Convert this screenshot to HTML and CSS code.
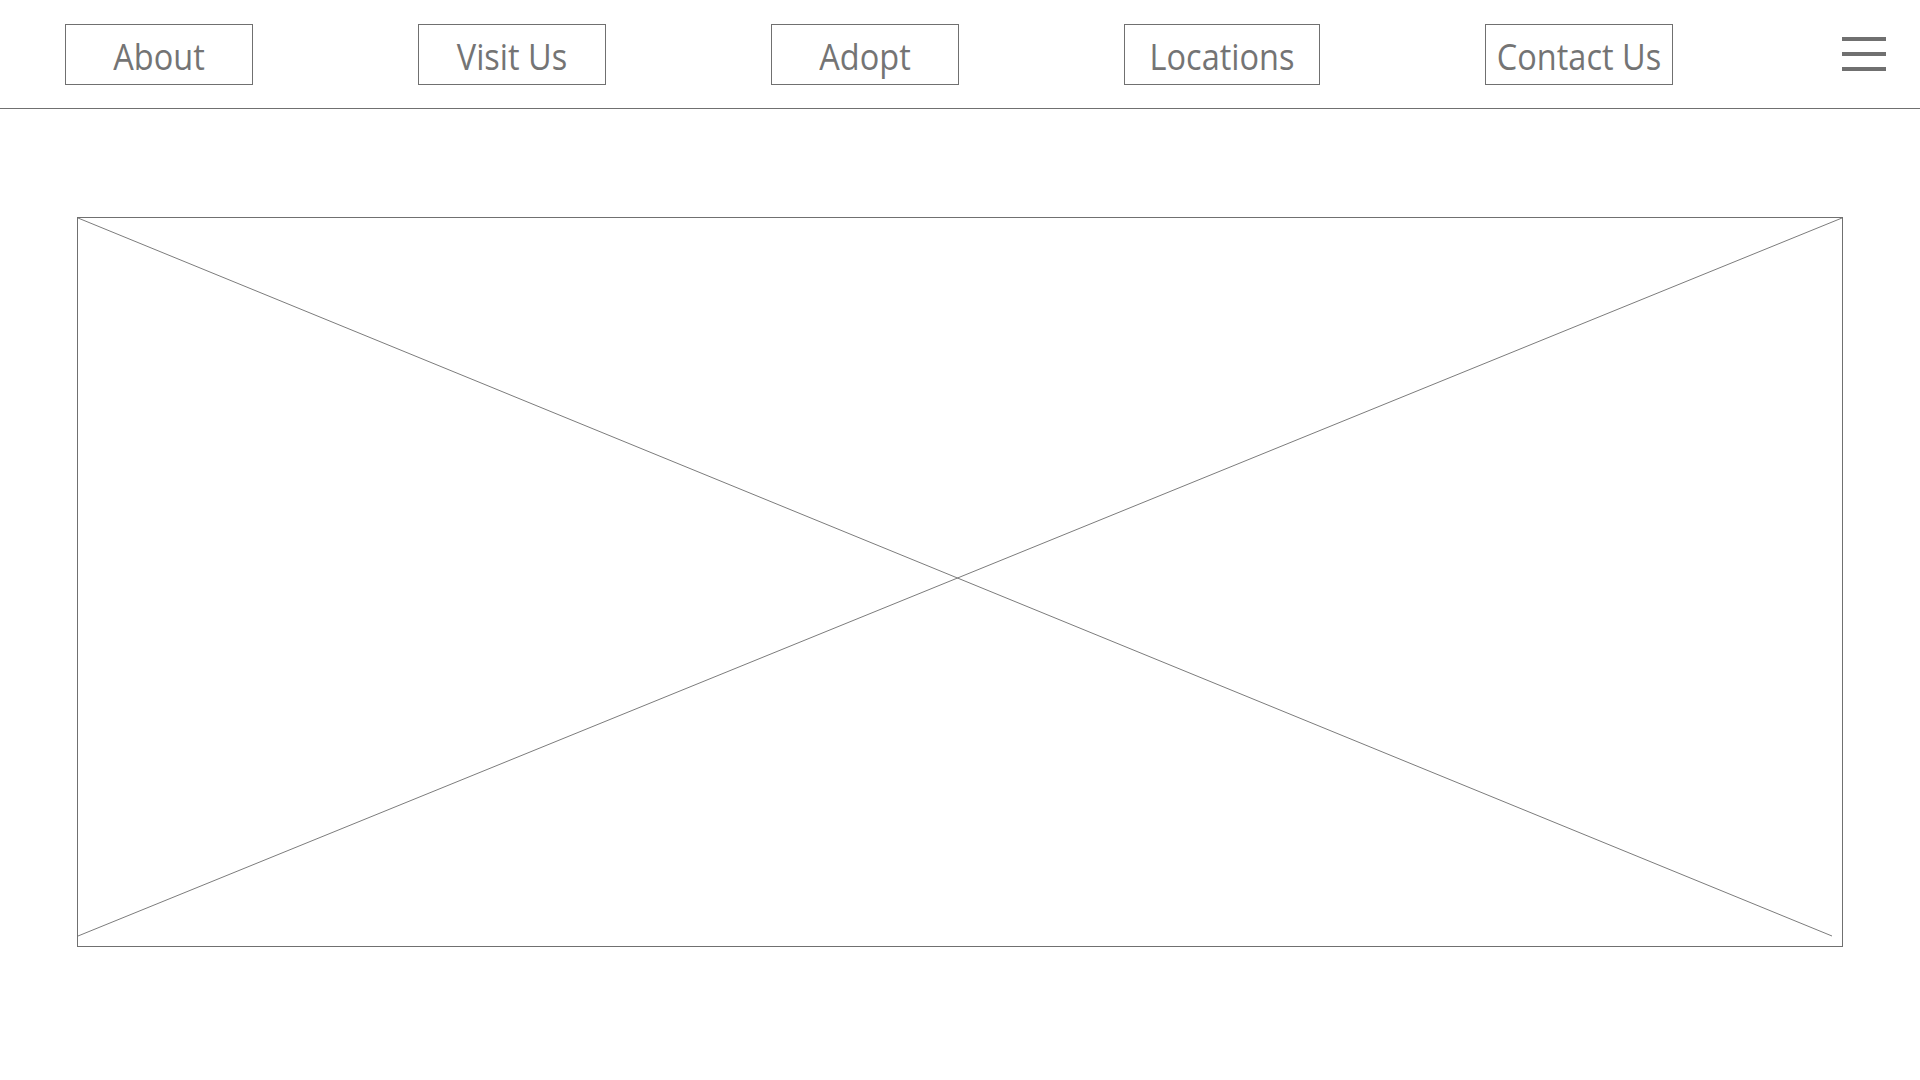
FILE: index.html
```html
<!DOCTYPE html>
<html lang="en">
<head>
<meta charset="utf-8">
<title>Wireframe</title>
<link rel="stylesheet" href="styles.css">
</head>
<body>
<header class="site-header">
  <nav class="nav">
    <a class="nav-btn" href="#"><span class="nav-label">About</span></a>
    <a class="nav-btn" href="#"><span class="nav-label">Visit Us</span></a>
    <a class="nav-btn" href="#"><span class="nav-label">Adopt</span></a>
    <a class="nav-btn nav-btn-wide" href="#"><span class="nav-label">Locations</span></a>
    <a class="nav-btn" href="#"><span class="nav-label">Contact Us</span></a>
  </nav>
  <button class="menu-toggle" aria-label="Menu">
    <span class="bar"></span>
    <span class="bar"></span>
    <span class="bar"></span>
  </button>
</header>
<main class="content">
  <div class="image-placeholder">
    <svg class="placeholder-x" viewBox="0 0 1764 728" preserveAspectRatio="none">
      <line x1="0" y1="0" x2="1754" y2="718"/>
      <line x1="0" y1="718" x2="1764" y2="0"/>
    </svg>
  </div>
</main>
</body>
</html>
```
FILE: styles.css
```css
html, body {
  margin: 0;
  padding: 0;
  background: #ffffff;
}

body {
  font-family: "Open Sans", "Noto Sans", sans-serif;
  color: #707070;
}

.site-header {
  height: 108px;
  border-bottom: 1px solid #707070;
  display: flex;
  align-items: center;
  padding-left: 65px;
  padding-right: 34px;
}

.nav {
  display: flex;
  gap: 165px;
}

.nav-btn {
  box-sizing: border-box;
  width: 188px;
  height: 61px;
  border: 1px solid #707070;
  display: flex;
  align-items: center;
  justify-content: center;
  text-decoration: none;
  color: #747474;
  font-size: 32.5px;
  padding-top: 3px;
}

.nav-btn-wide {
  width: 196px;
}

.nav-label {
  display: inline-block;
  transform: scaleY(1.12);
  white-space: nowrap;
}

.menu-toggle {
  margin-left: auto;
  width: 44px;
  height: 34px;
  padding: 0;
  border: 0;
  background: transparent;
  display: flex;
  flex-direction: column;
  justify-content: space-between;
}

.bar {
  display: block;
  width: 44px;
  height: 4px;
  background: #707070;
}

.content {
  padding-top: 108px;
  padding-left: 77px;
}

.image-placeholder {
  box-sizing: border-box;
  width: 1766px;
  height: 730px;
  border: 1px solid #707070;
}

.placeholder-x {
  display: block;
  width: 100%;
  height: 100%;
}

.placeholder-x line {
  stroke: #7c7c7c;
  stroke-width: 1;
  vector-effect: non-scaling-stroke;
}
```
